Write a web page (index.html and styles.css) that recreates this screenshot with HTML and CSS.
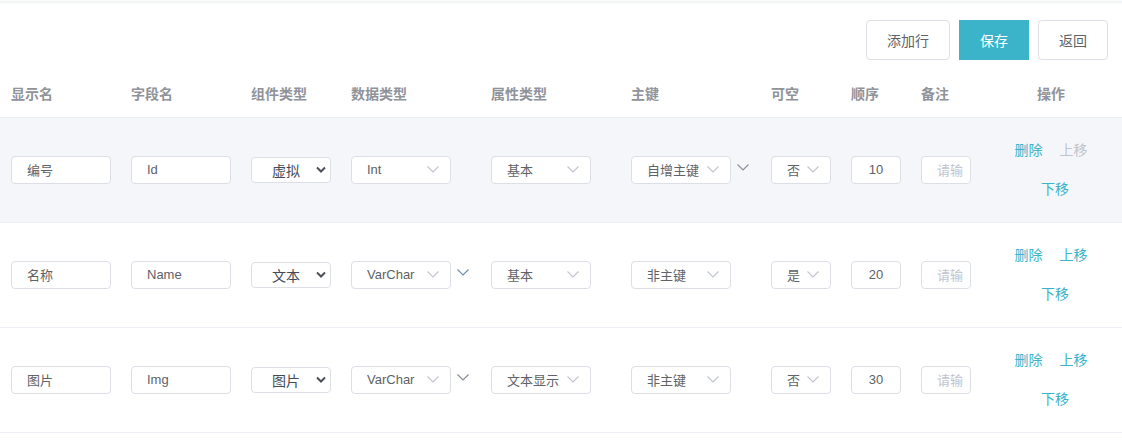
FILE: index.html
```html
<!DOCTYPE html>
<html lang="zh-CN">
<head>
  <meta charset="UTF-8">
  <meta name="viewport" content="width=device-width, initial-scale=1.0">
  <title>字段设置</title>
  <link rel="stylesheet" href="styles.css">
</head>
<body>
  <div class="page">
    <div class="topline"></div>

    <div class="toolbar">
      <button class="btn">添加行</button>
      <button class="btn btn-primary">保存</button>
      <button class="btn">返回</button>
    </div>

    <div class="grid grid-head">
      <div class="cell">显示名</div>
      <div class="cell">字段名</div>
      <div class="cell">组件类型</div>
      <div class="cell">数据类型</div>
      <div class="cell">属性类型</div>
      <div class="cell">主键</div>
      <div class="cell">可空</div>
      <div class="cell">顺序</div>
      <div class="cell">备注</div>
      <div class="cell cell-center">操作</div>
    </div>

    <!-- row 1 -->
    <div class="grid grid-row hover">
      <div class="cell"><div class="input w100">编号</div></div>
      <div class="cell"><div class="input w100">Id</div></div>
      <div class="cell">
        <div class="native-select"><span>虚拟</span>
          <svg class="native-arrow" viewBox="0 0 10 7"><polyline points="1,1.5 5,5.5 9,1.5"/></svg>
        </div>
      </div>
      <div class="cell">
        <div class="select w100"><span>Int</span>
          <svg class="arrow" viewBox="0 0 12 7"><polyline points="0.5,0.5 6,6 11.5,0.5"/></svg>
        </div>
      </div>
      <div class="cell">
        <div class="select w100"><span>基本</span>
          <svg class="arrow" viewBox="0 0 12 7"><polyline points="0.5,0.5 6,6 11.5,0.5"/></svg>
        </div>
      </div>
      <div class="cell">
        <div class="select w100"><span>自增主键</span>
          <svg class="arrow" viewBox="0 0 12 7"><polyline points="0.5,0.5 6,6 11.5,0.5"/></svg>
        </div>
        <svg class="stray" viewBox="0 0 12 7"><polyline points="0.5,0.5 6,6 11.5,0.5"/></svg>
      </div>
      <div class="cell">
        <div class="select w60"><span>否</span>
          <svg class="arrow" viewBox="0 0 12 7"><polyline points="0.5,0.5 6,6 11.5,0.5"/></svg>
        </div>
      </div>
      <div class="cell"><div class="input w50 center">10</div></div>
      <div class="cell"><div class="input w50 placeholder">请输</div></div>
      <div class="cell actions">
        <div class="line"><a class="link">删除</a><a class="link disabled">上移</a></div>
        <div class="line second"><a class="link">下移</a></div>
      </div>
    </div>

    <!-- row 2 -->
    <div class="grid grid-row">
      <div class="cell"><div class="input w100">名称</div></div>
      <div class="cell"><div class="input w100">Name</div></div>
      <div class="cell">
        <div class="native-select"><span>文本</span>
          <svg class="native-arrow" viewBox="0 0 10 7"><polyline points="1,1.5 5,5.5 9,1.5"/></svg>
        </div>
      </div>
      <div class="cell">
        <div class="select w100"><span>VarChar</span>
          <svg class="arrow" viewBox="0 0 12 7"><polyline points="0.5,0.5 6,6 11.5,0.5"/></svg>
        </div>
        <svg class="stray blue" viewBox="0 0 12 7"><polyline points="0.5,0.5 6,6 11.5,0.5"/></svg>
      </div>
      <div class="cell">
        <div class="select w100"><span>基本</span>
          <svg class="arrow" viewBox="0 0 12 7"><polyline points="0.5,0.5 6,6 11.5,0.5"/></svg>
        </div>
      </div>
      <div class="cell">
        <div class="select w100"><span>非主键</span>
          <svg class="arrow" viewBox="0 0 12 7"><polyline points="0.5,0.5 6,6 11.5,0.5"/></svg>
        </div>
      </div>
      <div class="cell">
        <div class="select w60"><span>是</span>
          <svg class="arrow" viewBox="0 0 12 7"><polyline points="0.5,0.5 6,6 11.5,0.5"/></svg>
        </div>
      </div>
      <div class="cell"><div class="input w50 center">20</div></div>
      <div class="cell"><div class="input w50 placeholder">请输</div></div>
      <div class="cell actions">
        <div class="line"><a class="link">删除</a><a class="link">上移</a></div>
        <div class="line second"><a class="link">下移</a></div>
      </div>
    </div>

    <!-- row 3 -->
    <div class="grid grid-row">
      <div class="cell"><div class="input w100">图片</div></div>
      <div class="cell"><div class="input w100">Img</div></div>
      <div class="cell">
        <div class="native-select"><span>图片</span>
          <svg class="native-arrow" viewBox="0 0 10 7"><polyline points="1,1.5 5,5.5 9,1.5"/></svg>
        </div>
      </div>
      <div class="cell">
        <div class="select w100"><span>VarChar</span>
          <svg class="arrow" viewBox="0 0 12 7"><polyline points="0.5,0.5 6,6 11.5,0.5"/></svg>
        </div>
        <svg class="stray" viewBox="0 0 12 7"><polyline points="0.5,0.5 6,6 11.5,0.5"/></svg>
      </div>
      <div class="cell">
        <div class="select w100"><span>文本显示</span>
          <svg class="arrow" viewBox="0 0 12 7"><polyline points="0.5,0.5 6,6 11.5,0.5"/></svg>
        </div>
      </div>
      <div class="cell">
        <div class="select w100"><span>非主键</span>
          <svg class="arrow" viewBox="0 0 12 7"><polyline points="0.5,0.5 6,6 11.5,0.5"/></svg>
        </div>
      </div>
      <div class="cell">
        <div class="select w60"><span>否</span>
          <svg class="arrow" viewBox="0 0 12 7"><polyline points="0.5,0.5 6,6 11.5,0.5"/></svg>
        </div>
      </div>
      <div class="cell"><div class="input w50 center">30</div></div>
      <div class="cell"><div class="input w50 placeholder">请输</div></div>
      <div class="cell actions">
        <div class="line"><a class="link">删除</a><a class="link">上移</a></div>
        <div class="line second"><a class="link">下移</a></div>
      </div>
    </div>
  </div>
</body>
</html>
```

FILE: styles.css
```css
:root {
  --primary-color: #3bb4c9;
  --text-color: #606266;
  --head-color: #909399;
  --border-color: #dcdfe6;
  --line-color: #ebeef5;
  --hover-bg: #f5f6fa;
  --placeholder: #c0c4cc;
}

* {
  margin: 0;
  padding: 0;
  box-sizing: border-box;
}

body {
  background-color: #ffffff;
  color: var(--text-color);
  font-family: "Liberation Sans", "Noto Sans CJK SC", sans-serif;
  font-size: 13px;
}

.page {
  width: 1122px;
}

.topline {
  height: 4px;
  background: linear-gradient(#ffffff, #eff1f4 50%, #ffffff);
}

.toolbar {
  display: flex;
  justify-content: flex-end;
  gap: 9px;
  padding: 16px 14px 0 0;
  margin-bottom: 9px;
}

.btn {
  height: 40px;
  padding: 0 20px;
  border: 1px solid var(--border-color);
  border-radius: 4px;
  background-color: #ffffff;
  color: var(--text-color);
  font-family: inherit;
  font-size: 14px;
  cursor: pointer;
}

.btn-primary {
  width: 70px;
  padding: 0;
  border-color: var(--primary-color);
  border-radius: 0;
  background-color: var(--primary-color);
  color: #ffffff;
}

.btn + .btn-primary + .btn {
  width: 70px;
  padding: 0;
}

.grid {
  display: grid;
  grid-template-columns: 120px 120px 100px 140px 140px 140px 80px 70px 70px 142px;
  align-items: center;
  border-bottom: 1px solid var(--line-color);
}

.grid-head {
  height: 49px;
  color: var(--head-color);
  font-size: 14px;
  font-weight: bold;
}

.grid-row {
  height: 105px;
}

.grid-row.hover {
  background-color: var(--hover-bg);
}

.cell {
  display: flex;
  align-items: center;
  padding-left: 11px;
}

.cell-center {
  justify-content: center;
  padding-left: 0;
}

.input,
.select {
  height: 28px;
  display: flex;
  align-items: center;
  padding-left: 15px;
  padding-bottom: 2px;
  border: 1px solid var(--border-color);
  border-radius: 4px;
  background-color: #ffffff;
  color: var(--text-color);
  white-space: nowrap;
  overflow: hidden;
}

.w100 { width: 100px; }
.w60 { width: 60px; }
.w50 { width: 50px; }

.input.center {
  justify-content: center;
  padding-left: 0;
}

.input.placeholder {
  color: var(--placeholder);
}

.select {
  justify-content: space-between;
  padding-right: 11px;
}

.arrow {
  width: 12px;
  height: 7px;
  flex-shrink: 0;
  fill: none;
  stroke: var(--placeholder);
  stroke-width: 1.1;
}

.stray {
  width: 12px;
  height: 7px;
  margin-left: 6px;
  margin-top: -5px;
  fill: none;
  stroke: #8a8f9c;
  stroke-width: 1.2;
}

.stray.blue {
  stroke: #6c8fb5;
}

.native-select {
  width: 80px;
  height: 26px;
  display: flex;
  align-items: center;
  justify-content: space-between;
  padding: 0 4px 1px 20px;
  border: 1px solid var(--border-color);
  border-radius: 4px;
  background-color: #ffffff;
  color: #444a55;
  font-size: 14px;
}

.native-arrow {
  width: 10px;
  height: 7px;
  fill: none;
  stroke: #4a4f58;
  stroke-width: 2;
}

.actions {
  flex-direction: column;
  padding-left: 0;
  font-size: 14px;
}

.line {
  display: flex;
  gap: 17px;
  line-height: 39px;
}

.line.second {
  margin-left: 8px;
}

.link {
  color: var(--primary-color);
  cursor: pointer;
}

.link.disabled {
  color: var(--placeholder);
}
```
